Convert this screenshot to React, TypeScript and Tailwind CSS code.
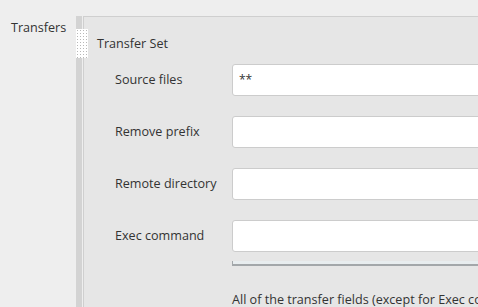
import React from "react";

const rows = [
  { label: "Source files", value: "**" },
  { label: "Remove prefix", value: "" },
  { label: "Remote directory", value: "" },
  { label: "Exec command", value: "" },
];

const Grip = () => (
  <svg width="12" height="29" className="absolute left-[76px] top-[29px]">
    <defs>
      <pattern id="dots" width="3" height="3" patternUnits="userSpaceOnUse">
        <rect x="1" y="1" width="1" height="1" fill="#b8b8b8" />
      </pattern>
    </defs>
    <rect width="12" height="29" fill="#ffffff" />
    <rect width="12" height="29" fill="url(#dots)" />
  </svg>
);

export default function App() {
  return (
    <div
      className="relative flex h-[307px] w-[478px] overflow-hidden bg-[#eeeeee] text-[12.6px] text-[#333333]"
      style={{ fontFamily: '"Open Sans", "Noto Sans", sans-serif' }}>
      <div className="w-[76px] shrink-0 pl-[11px] pt-[19px] leading-[18px]">Transfers</div>
      <div className="mt-[16px] w-[6px] shrink-0 bg-[#d3d3d3]" />
      <div className="w-[1px] shrink-0" />
      <div className="mt-[16px] flex-1 border-l border-t border-[#cfcfcf] bg-[#e6e6e6] pl-[13px] pt-[18px]">
        <div className="leading-[18px]">Transfer Set</div>
        <div className="mt-[11px] flex flex-col gap-[20px] pl-[18px]">
          {rows.map(r => (
            <div key={r.label} className="flex items-center">
              <div className="w-[117px] shrink-0">{r.label}</div>
              <div className="flex h-[32px] w-[260px] shrink-0 items-center rounded-[3px] border border-[#cccccc] bg-white px-[6px] text-[12px]">
                {r.value}
              </div>
            </div>
          ))}
        </div>
        <div className="ml-[135px] mt-[9px] h-[5px] w-[260px] border-b-2 border-l border-[#a3a7aa] bg-[#e8edef]" />
        <div className="ml-[135px] mt-[25px] whitespace-nowrap leading-[18px]">
          All of the transfer fields (except for Exec command) support substitution
        </div>
      </div>
      <Grip />
    </div>
  );
}
